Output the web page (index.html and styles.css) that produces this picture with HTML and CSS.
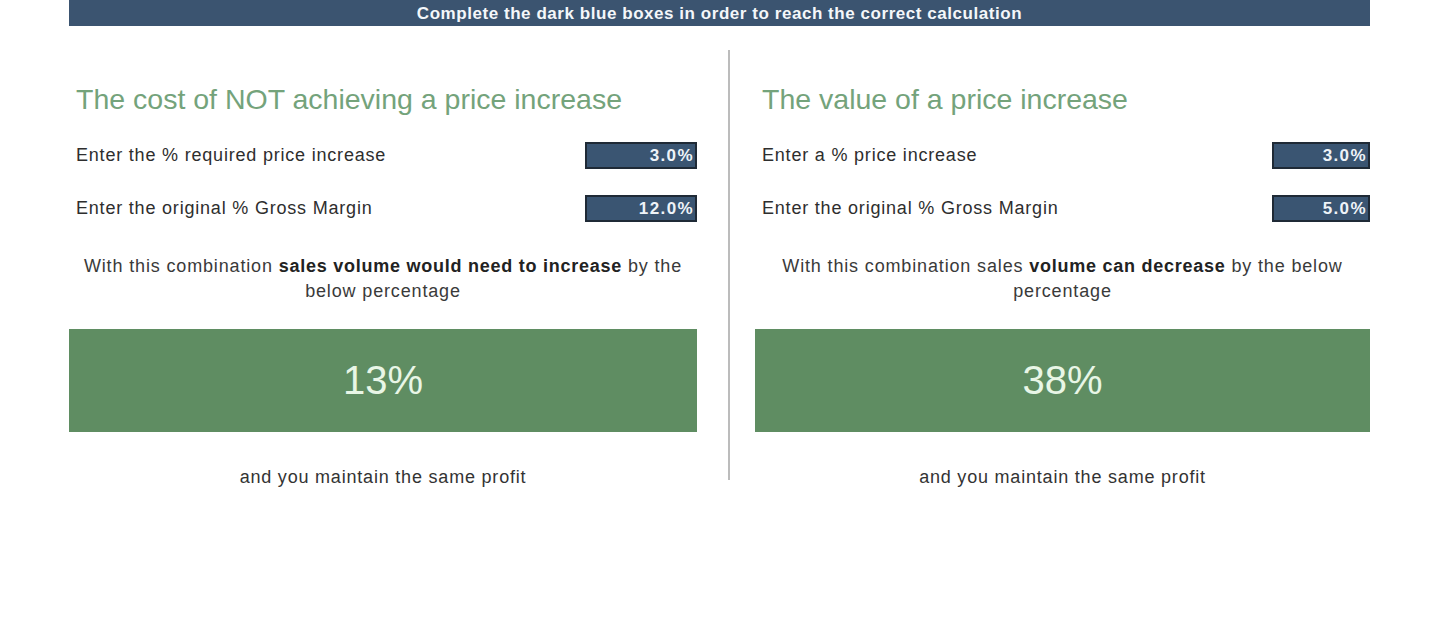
FILE: index.html
```html
<!DOCTYPE html>
<html lang="en">
<head>
<meta charset="utf-8">
<title>Price increase calculator</title>
<link rel="stylesheet" href="styles.css">
</head>
<body>
<div class="page">
  <div class="banner">Complete the dark blue boxes in order to reach the correct calculation</div>
  <div class="columns">
    <section class="col col-left">
      <h2 class="title">The cost of NOT achieving a price increase</h2>
      <div class="row">
        <span class="label">Enter the % required price increase</span>
        <span class="input input-wide">3.0%</span>
      </div>
      <div class="row">
        <span class="label">Enter the original % Gross Margin</span>
        <span class="input input-wide">12.0%</span>
      </div>
      <p class="desc">With this combination <b>sales volume would need to increase</b> by the<br>below percentage</p>
      <div class="result">13%</div>
      <p class="foot">and you maintain the same profit</p>
    </section>
    <div class="divider"></div>
    <section class="col col-right">
      <h2 class="title">The value of a price increase</h2>
      <div class="row">
        <span class="label">Enter a % price increase</span>
        <span class="input input-narrow">3.0%</span>
      </div>
      <div class="row">
        <span class="label">Enter the original % Gross Margin</span>
        <span class="input input-narrow">5.0%</span>
      </div>
      <p class="desc">With this combination sales <b>volume can decrease</b> by the below<br>percentage</p>
      <div class="result">38%</div>
      <p class="foot">and you maintain the same profit</p>
    </section>
  </div>
</div>
</body>
</html>
```
FILE: styles.css
```css
html, body {
  margin: 0;
  padding: 0;
  background: #ffffff;
}
body {
  font-family: "Liberation Sans", Arial, sans-serif;
  color: #333333;
}
.page {
  width: 1301px;
  margin-left: 69px;
}
.banner {
  height: 26px;
  background: #3b5470;
  color: #f4f7fa;
  font-weight: bold;
  font-size: 17px;
  line-height: 28px;
  text-align: center;
  letter-spacing: 0.55px;
}
.columns {
  display: flex;
  align-items: flex-start;
  margin-top: 24px;
}
.col {
  display: flex;
  flex-direction: column;
  padding-top: 33px;
}
.col-left {
  width: 628px;
}
.col-right {
  width: 615px;
}
.divider {
  width: 2px;
  height: 430px;
  background: #bcbcbc;
  margin: 0 25px 0 31px;
}
.title {
  margin: 0;
  padding-left: 7px;
  font-weight: normal;
  font-size: 28.5px;
  line-height: 32px;
  color: #74a37b;
  letter-spacing: 0;
}
.row {
  display: flex;
  align-items: center;
  justify-content: space-between;
  height: 27px;
}
.title + .row {
  margin-top: 27px;
}
.row + .row {
  margin-top: 26px;
}
.label {
  padding-left: 7px;
  font-size: 18px;
  letter-spacing: 0.8px;
  color: #2e2e2e;
}
.input {
  box-sizing: border-box;
  height: 27px;
  background: #3a5572;
  border: 2px solid #1f2a36;
  color: #eef3f8;
  font-weight: bold;
  font-size: 17px;
  line-height: 24px;
  text-align: right;
  padding-right: 1px;
  letter-spacing: 1.4px;
}
.input-wide {
  width: 112px;
}
.input-narrow {
  width: 98px;
}
.desc {
  margin: 32px 0 0;
  text-align: center;
  font-size: 18px;
  line-height: 25px;
  letter-spacing: 0.85px;
  color: #3a3a3a;
}
.desc b {
  color: #222222;
  letter-spacing: 0.75px;
}
.result {
  margin-top: 25px;
  height: 103px;
  background: #5f8d62;
  color: #e8f6e6;
  font-size: 40px;
  line-height: 103px;
  text-align: center;
}
.foot {
  margin: 35px 0 0;
  text-align: center;
  font-size: 18px;
  line-height: 20px;
  letter-spacing: 0.8px;
  color: #333333;
}
```
